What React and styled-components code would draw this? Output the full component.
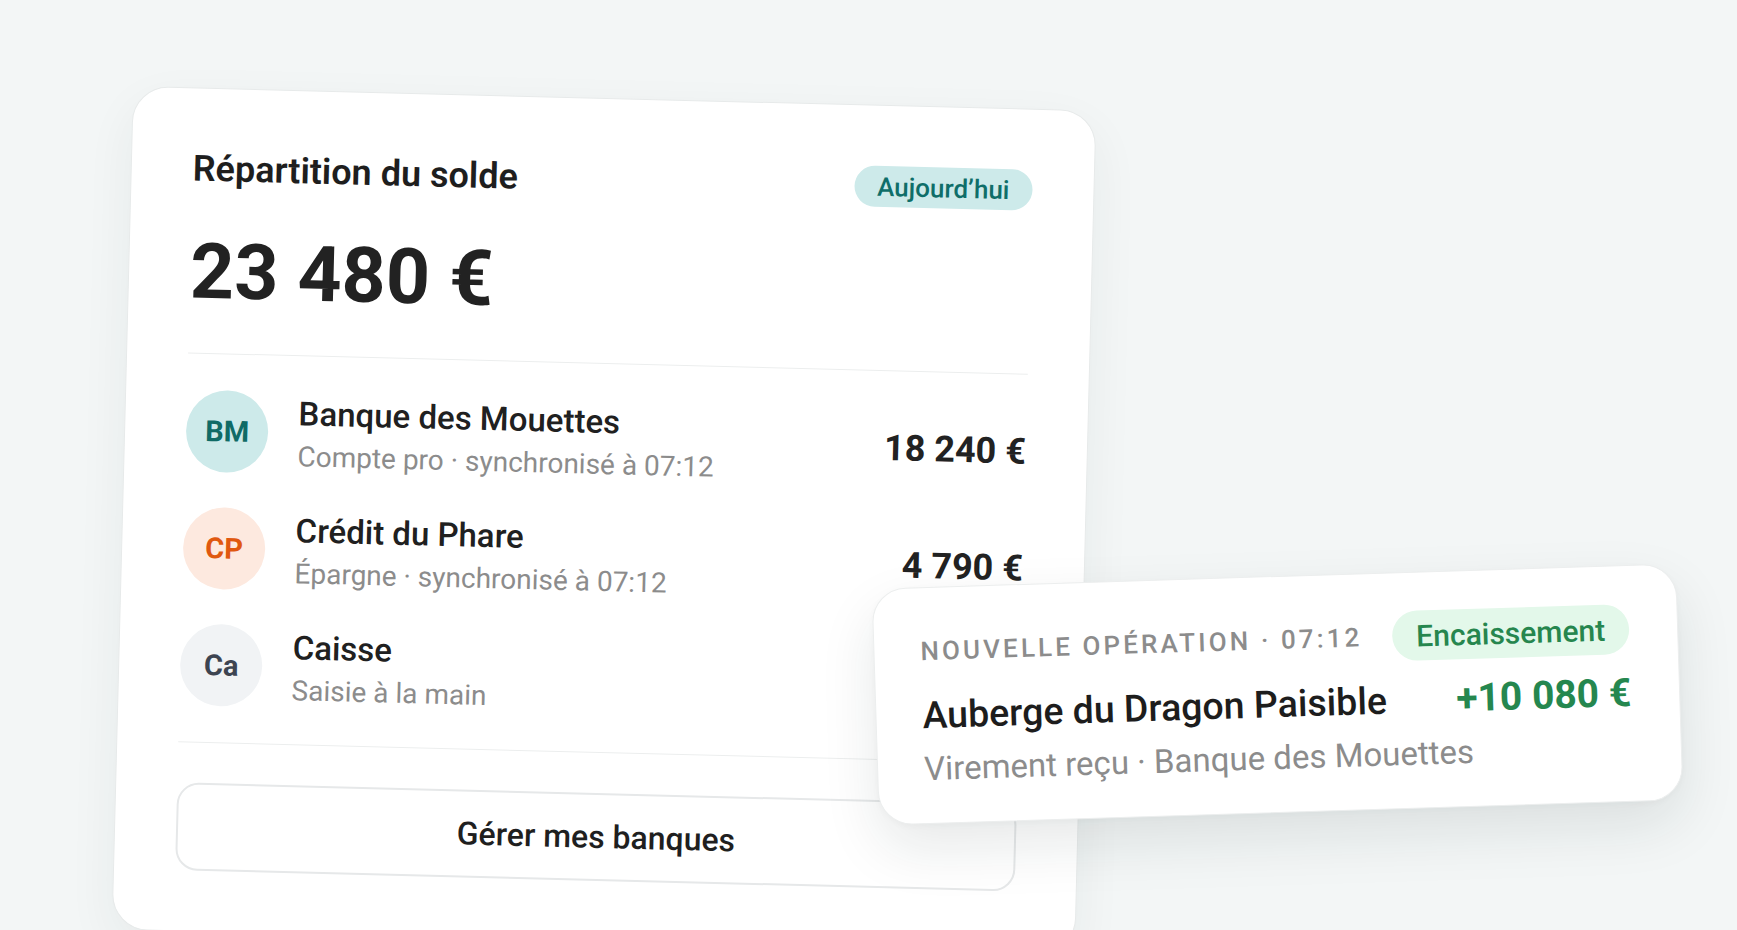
import React from "react";
import styled, { createGlobalStyle } from "styled-components";

const GlobalStyle = createGlobalStyle`
  html, body {
    margin: 0;
    height: 100%;
    overflow: hidden;
    background: #f3f6f6;
  }
  body {
    font-family: Roboto, "Liberation Sans", sans-serif;
    color: #1f1f1f;
    -webkit-font-smoothing: antialiased;
  }
`;

const Stage = styled.div`
  position: relative;
  width: 100%;
  height: 930px;
  box-sizing: border-box;
  padding: 98px 0 0 122px;
`;

const Card = styled.section`
  width: 964px;
  height: 844px;
  box-sizing: border-box;
  padding: 60px 61px;
  background: #fff;
  border: 1px solid #e7eaea;
  border-radius: 36px;
  box-shadow: 0 18px 50px rgba(30, 50, 50, 0.06);
  transform: rotate(1.45deg);
  display: flex;
  flex-direction: column;
`;

const Header = styled.div`
  display: flex;
  justify-content: space-between;
  align-items: flex-start;
`;

const Title = styled.h2`
  margin: 0;
  font-size: 36px;
  font-weight: 600;
  line-height: 40px;
  color: #1e1e1e;
`;

const Pill = styled.span`
  display: inline-flex;
  align-items: center;
  height: ${(p) => p.h}px;
  padding: 0 ${(p) => p.px}px;
  border-radius: ${(p) => p.h / 2}px;
  background: ${(p) => p.bg};
  color: ${(p) => p.fg};
  font-size: ${(p) => p.size}px;
  font-weight: 500;
  white-space: nowrap;
`;

const Total = styled.div`
  margin-top: 40px;
  font-size: 77px;
  font-weight: 700;
  line-height: 85px;
  color: #222;
`;

const Divider = styled.div`
  height: 2px;
  background: #eceeee;
  margin-top: ${(p) => p.mt}px;
`;

const List = styled.div`
  display: flex;
  flex-direction: column;
  gap: 35px;
  padding: 36px 0;
`;

const Row = styled.div`
  display: flex;
  align-items: center;
  gap: 30px;
  height: 82px;
`;

const Avatar = styled.div`
  flex: none;
  width: 82px;
  height: 82px;
  border-radius: 50%;
  background: ${(p) => p.bg};
  color: ${(p) => p.fg};
  display: flex;
  align-items: center;
  justify-content: center;
  font-size: 29px;
  font-weight: 700;
`;

const Info = styled.div`
  flex: 1;
  display: flex;
  flex-direction: column;
  gap: 6px;
  padding-top: 4px;
`;

const Name = styled.div`
  font-size: 33px;
  font-weight: 500;
  line-height: 39px;
  color: #202020;
`;

const Sub = styled.div`
  font-size: ${(p) => p.size || 28}px;
  font-weight: 400;
  line-height: 1.3;
  color: #8c8c8c;
`;

const Value = styled.div`
  font-size: 36px;
  font-weight: 700;
  color: #222;
  white-space: nowrap;
`;

const Button = styled.button`
  margin-top: 40px;
  height: 88px;
  width: 100%;
  flex: none;
  border: 2px solid #e6e8e9;
  border-radius: 22px;
  background: #fff;
  font-family: inherit;
  font-size: 32px;
  font-weight: 500;
  color: #1f1f1f;
  display: flex;
  align-items: center;
  justify-content: center;
`;

const Toast = styled.div`
  position: absolute;
  left: 875px;
  top: 576px;
  width: 805px;
  height: 237px;
  box-sizing: border-box;
  padding: 38px 48px 39px 46px;
  background: #fff;
  border: 1px solid #eceeee;
  border-radius: 34px;
  box-shadow: 0 24px 56px rgba(20, 40, 40, 0.1), 0 2px 6px rgba(0, 0, 0, 0.03);
  transform: rotate(-1.8deg);
  display: flex;
  flex-direction: column;
`;

const ToastTop = styled.div`
  display: flex;
  justify-content: space-between;
  align-items: center;
`;

const Label = styled.div`
  font-size: 26px;
  font-weight: 500;
  letter-spacing: 0.12em;
  text-transform: uppercase;
  color: #8c8c8c;
  white-space: nowrap;
`;

const ToastMain = styled.div`
  display: flex;
  justify-content: space-between;
  align-items: center;
  margin-top: 16px;
`;

const Payee = styled.div`
  font-size: 37.5px;
  font-weight: 500;
  line-height: 44px;
  color: #1d1d1d;
`;

const Credit = styled.div`
  font-size: 39px;
  font-weight: 700;
  color: #25874f;
  white-space: nowrap;
`;

const banks = [
  { code: "BM", bg: "#cdeaea", fg: "#0f6b66", name: "Banque des Mouettes", sub: "Compte pro · synchronisé à 07:12", value: "18 240 €" },
  { code: "CP", bg: "#fde9df", fg: "#e0580f", name: "Crédit du Phare", sub: "Épargne · synchronisé à 07:12", value: "4 790 €" },
  { code: "Ca", bg: "#f1f3f5", fg: "#3d4451", name: "Caisse", sub: "Saisie à la main", value: "" },
];

export default function App() {
  return (
    <>
      <GlobalStyle />
      <Stage>
        <Card>
          <Header>
            <Title>Répartition du solde</Title>
            <Pill h={41} px={23} size={26} bg="#cdeaea" fg="#0f6e69">
              Aujourd’hui
            </Pill>
          </Header>
          <Total>23 480 €</Total>
          <Divider mt={38} />
          <List>
            {banks.map((b) => (
              <Row key={b.code}>
                <Avatar bg={b.bg} fg={b.fg}>{b.code}</Avatar>
                <Info>
                  <Name>{b.name}</Name>
                  <Sub>{b.sub}</Sub>
                </Info>
                {b.value && <Value>{b.value}</Value>}
              </Row>
            ))}
          </List>
          <Divider mt={0} />
          <Button>Gérer mes banques</Button>
        </Card>

        <Toast>
          <ToastTop>
            <Label>Nouvelle opération · 07:12</Label>
            <Pill h={50} px={24} size={30} bg="#e3f8ea" fg="#26864e">
              Encaissement
            </Pill>
          </ToastTop>
          <ToastMain>
            <Payee>Auberge du Dragon Paisible</Payee>
            <Credit>+10 080 €</Credit>
          </ToastMain>
          <Sub size={33} style={{ marginTop: 10 }}>
            Virement reçu · Banque des Mouettes
          </Sub>
        </Toast>
      </Stage>
    </>
  );
}
